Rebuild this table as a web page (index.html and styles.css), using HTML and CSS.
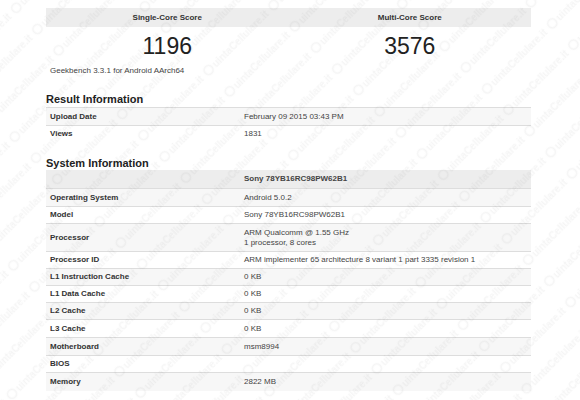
FILE: index.html
```html
<!DOCTYPE html>
<html lang="en">
<head>
<meta charset="utf-8">
<title>Geekbench result</title>
<link rel="stylesheet" href="styles.css">
</head>
<body>
<div class="page">
  <div class="scores">
    <div class="score-col">
      <div class="score-head">Single-Core Score</div>
      <div class="score-val">1196</div>
    </div>
    <div class="score-col">
      <div class="score-head">Multi-Core Score</div>
      <div class="score-val">3576</div>
    </div>
  </div>
  <p class="platform">Geekbench 3.3.1 for Android AArch64</p>

  <h2 class="section-title">Result Information</h2>
  <table class="info">
    <tbody>
      <tr class="r18"><td class="label">Upload Date</td><td class="value">February 09 2015 03:43 PM</td></tr>
      <tr><td class="label">Views</td><td class="value">1831</td></tr>
    </tbody>
  </table>

  <h2 class="section-title sys-title">System Information</h2>
  <table class="info sys">
    <thead>
      <tr><th class="label"></th><th class="value">Sony 78YB16RC98PW62B1</th></tr>
    </thead>
    <tbody>
      <tr class="r18"><td class="label">Operating System</td><td class="value">Android 5.0.2</td></tr>
      <tr><td class="label">Model</td><td class="value">Sony 78YB16RC98PW62B1</td></tr>
      <tr class="tall"><td class="label">Processor</td><td class="value">ARM Qualcomm @ 1.55 GHz<br>1 processor, 8 cores</td></tr>
      <tr><td class="label">Processor ID</td><td class="value">ARM implementer 65 architecture 8 variant 1 part 3335 revision 1</td></tr>
      <tr><td class="label">L1 Instruction Cache</td><td class="value">0 KB</td></tr>
      <tr><td class="label">L1 Data Cache</td><td class="value">0 KB</td></tr>
      <tr><td class="label">L2 Cache</td><td class="value">0 KB</td></tr>
      <tr class="r18"><td class="label">L3 Cache</td><td class="value">0 KB</td></tr>
      <tr class="r18"><td class="label">Motherboard</td><td class="value">msm8994</td></tr>
      <tr><td class="label">BIOS</td><td class="value"></td></tr>
      <tr class="r18"><td class="label">Memory</td><td class="value">2822 MB</td></tr>
    </tbody>
  </table>
</div>

<svg class="watermark" width="580" height="400" aria-hidden="true">
  <defs>
    <pattern id="wm" width="92" height="30" patternUnits="userSpaceOnUse" patternTransform="rotate(-45)">
      <circle cx="6" cy="17" r="4.5" fill="none" stroke="#000" stroke-width="1.6"/>
      <text x="13" y="21" font-family="Liberation Sans, Arial, sans-serif" font-size="10" font-weight="bold" fill="#000">uintaCellulare.it</text>
    </pattern>
  </defs>
  <rect width="580" height="400" fill="url(#wm)"/>
</svg>
</body>
</html>
```

FILE: styles.css
```css
html, body {
  margin: 0;
  padding: 0;
  background: #ffffff;
}

body {
  font-family: "Liberation Sans", Arial, sans-serif;
  color: #333333;
}

.page {
  width: 485px;
  margin-left: 46px;
  padding-top: 8px;
}

.scores {
  display: grid;
  grid-template-columns: 1fr 1fr;
}

.score-head {
  background: #ededed;
  height: 19px;
  line-height: 19px;
  font-size: 8px;
  font-weight: bold;
  text-align: center;
  color: #333333;
}

.score-val {
  font-size: 23px;
  line-height: 38px;
  text-align: center;
  color: #222222;
}

.platform {
  margin: 0;
  padding-left: 4px;
  font-size: 8px;
  line-height: 12px;
  color: #444444;
}

.section-title {
  margin: 15px 0 1px 0;
  font-size: 11px;
  line-height: 14px;
  font-weight: bold;
  color: #222222;
}

.sys-title {
  margin-top: 13px;
  margin-bottom: 0;
}

.info {
  width: 485px;
  border-collapse: collapse;
  font-size: 8px;
  line-height: 10px;
}

.info td, .info th {
  padding: 0 4px;
  text-align: left;
  vertical-align: middle;
  border-top: 1px solid #dddddd;
}

.info .label {
  width: 186px;
  font-weight: bold;
  color: #333333;
}

.info .value {
  color: #444444;
}

.info tbody tr {
  height: 17px;
}

.info tbody tr.r18 {
  height: 18px;
}

.info tbody tr:nth-child(odd) {
  background: #f7f7f7;
}

.info tbody tr.tall {
  height: 28px;
}

.sys thead tr {
  height: 19px;
  background: #ededed;
}

.sys thead th {
  border-top: none;
  font-weight: bold;
  color: #333333;
}

.watermark {
  position: absolute;
  left: 0;
  top: 0;
  pointer-events: none;
  opacity: 0.035;
}
```
